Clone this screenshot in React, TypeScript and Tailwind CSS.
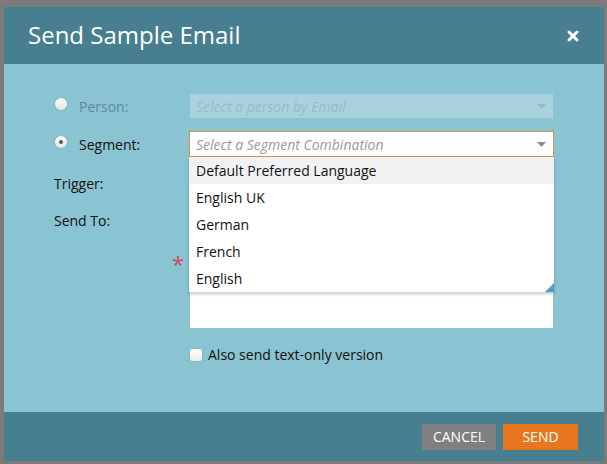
import { X } from 'lucide-react'

const languages = ['Default Preferred Language', 'English UK', 'German', 'French', 'English']

function Arrow({ className }: { className?: string }) {
  return (
    <svg width="9" height="5" viewBox="0 0 9 5" className={className}>
      <polygon points="0,0 9,0 4.5,5" fill="currentColor" />
    </svg>
  )
}

function Radio({ checked }: { checked?: boolean }) {
  return (
    <span className="w-[12px] h-[12px] rounded-full bg-gradient-to-b from-white to-[#e4e4e4] shadow-[0_0_1px_rgba(0,0,0,0.35)] flex items-center justify-center -mt-[5px] shrink-0">
      {checked && <span className="w-[4px] h-[4px] rounded-full bg-[#555]" />}
    </span>
  )
}

export default function App() {
  return (
    <div className="w-[607px] h-[464px] bg-[#7b7b7b] pt-[7px] pl-[4px] overflow-hidden font-['Open_Sans',sans-serif]">
      <div className="w-[600px] h-[454px] flex flex-col">
        {/* Header */}
        <div className="h-[57px] bg-[#477f91] flex items-center justify-between pl-[24px] pr-[23px]">
          <h1 className="text-[24px] text-white leading-none -mt-[1px]">Send Sample Email</h1>
          <X className="w-[16px] h-[16px] text-white" strokeWidth={4.5} />
        </div>

        {/* Body */}
        <div className="flex-1 bg-[#8ac3d2] relative pt-[30px] text-[14px] text-[#111]">
          <div className="flex items-center h-[24px] pl-[51px]">
            <Radio />
            <span className="ml-[12px] w-[110px] text-[#5d8a99]">Person:</span>
            <div className="ml-[1px] w-[363px] h-[24px] bg-[#aad2de] flex items-center justify-between pl-[6px] pr-[7px]">
              <span className="italic text-[14px] text-[#94bdca]">Select a person by Email</span>
              <Arrow className="text-[#93bccb]" />
            </div>
          </div>

          <div className="flex items-center h-[26px] mt-[13px] pl-[51px]">
            <Radio checked />
            <span className="ml-[12px] w-[110px]">Segment:</span>
            <div className="w-[365px] h-[26px] bg-white border border-[#d6923f] flex items-center justify-between pl-[6px] pr-[7px]">
              <span className="italic text-[14px] text-[#999]">Select a Segment Combination</span>
              <Arrow className="text-[#8c8c8c]" />
            </div>
          </div>

          <div className="flex items-center h-[26px] mt-[13px] pl-[50px]">
            <span className="w-[135px]">Trigger:</span>
            <div className="ml-[1px] w-[363px] h-[26px] bg-white" />
          </div>

          <div className="flex items-center h-[26px] mt-[11px] pl-[50px]">
            <span className="w-[135px]">Send To:</span>
            <div className="ml-[1px] w-[363px] h-[26px] bg-white" />
          </div>

          <div className="flex mt-[17px] pl-[168px]">
            <span className="w-[18px] text-[22px] leading-none text-[#c2514d] pt-[2px]">*</span>
            <div className="w-[363px] h-[78px] bg-white" />
          </div>

          <label className="flex items-center mt-[16px] pl-[186px]">
            <span className="w-[12px] h-[12px] bg-gradient-to-b from-white to-[#ececec] rounded-[2px] shadow-[0_0_1px_rgba(0,0,0,0.5)]" />
            <span className="ml-[6px]">Also send text-only version</span>
          </label>

          {/* Segment dropdown */}
          <ul className="absolute left-[185px] top-[93px] w-[365px] bg-white shadow-[0_2px_3px_rgba(0,0,0,0.22)]">
            {languages.map((lang, i) => (
              <li
                key={lang}
                className={`h-[27px] flex items-center pl-[7px] ${i === 0 ? 'bg-[#f2f2f4]' : ''}`}
              >
                {lang}
              </li>
            ))}
            <svg width="9" height="9" viewBox="0 0 9 9" className="absolute right-0 bottom-0">
              <polygon points="9,0 9,9 0,9" fill="#4b9fc3" />
            </svg>
          </ul>
        </div>

        {/* Footer */}
        <div className="h-[49px] bg-[#477f91] flex items-center justify-end gap-[7px] pr-[26px]">
          <button className="w-[74px] h-[26px] bg-[#7f7f7f] text-white text-[14px]">CANCEL</button>
          <button className="w-[75px] h-[26px] bg-[#e8761e] text-white text-[14px]">SEND</button>
        </div>
      </div>
    </div>
  )
}
